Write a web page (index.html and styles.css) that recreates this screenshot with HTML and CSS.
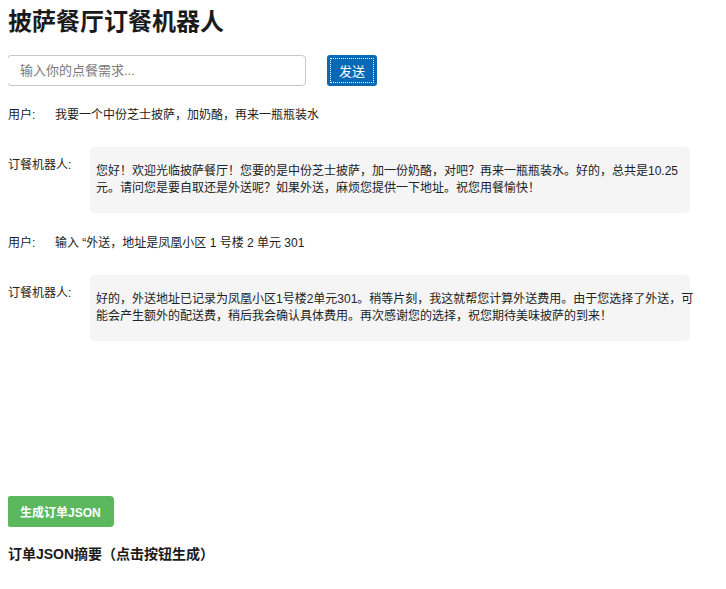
FILE: index.html
```html
<!DOCTYPE html>
<html lang="zh-CN">
<head>
<meta charset="utf-8">
<title>披萨餐厅订餐机器人</title>
<link rel="stylesheet" href="styles.css">
</head>
<body>
<h1 class="title">披萨餐厅订餐机器人</h1>
<div class="input-row">
  <input class="query" type="text" placeholder="输入你的点餐需求...">
  <button class="send">发送</button>
</div>
<div class="chat">
  <div class="msg user">
    <div class="who">用户:</div>
    <div class="text">我要一个中份芝士披萨，加奶酪，再来一瓶瓶装水</div>
  </div>
  <div class="msg bot">
    <div class="who">订餐机器人:</div>
    <div class="bubble"><p>您好！欢迎光临披萨餐厅！您要的是中份芝士披萨，加一份奶酪，对吧？再来一瓶瓶装水。好的，总共是10.25元。请问您是要自取还是外送呢？如果外送，麻烦您提供一下地址。祝您用餐愉快！</p></div>
  </div>
  <div class="msg user">
    <div class="who">用户:</div>
    <div class="text">输入 “外送，地址是凤凰小区 1 号楼 2 单元 301</div>
  </div>
  <div class="msg bot">
    <div class="who">订餐机器人:</div>
    <div class="bubble"><p>好的，外送地址已记录为凤凰小区1号楼2单元301。稍等片刻，我这就帮您计算外送费用。由于您选择了外送，可能会产生额外的配送费，稍后我会确认具体费用。再次感谢您的选择，祝您期待美味披萨的到来！</p></div>
  </div>
</div>
<button class="gen">生成订单JSON</button>
<h3 class="summary">订单JSON摘要（点击按钮生成）</h3>
</body>
</html>
```
FILE: styles.css
```css
body {
  margin: 8px;
  font-family: "Liberation Sans", "Noto Sans CJK SC", sans-serif;
  color: #222;
  background: #fff;
}
.title {
  font-size: 24px;
  font-weight: bold;
  line-height: 28px;
  margin: 0;
  color: #1a1a1a;
}
.input-row {
  display: flex;
  align-items: center;
  gap: 21px;
  margin-top: 19px;
  margin-left: -1px;
}
.query {
  width: 299px;
  height: 31px;
  box-sizing: border-box;
  border: 1px solid #c8c8c8;
  border-radius: 4px;
  padding: 0 12px;
  font-family: "Liberation Sans", "Noto Sans CJK SC", sans-serif;
  font-size: 13px;
  color: #333;
}
.query::placeholder {
  color: #7a7a7a;
}
.send {
  width: 50px;
  height: 31px;
  background: #0a69b4;
  border: none;
  border-radius: 3px;
  color: #fff;
  font-family: "Liberation Sans", "Noto Sans CJK SC", sans-serif;
  font-size: 13px;
  outline: 1px dotted #fff;
  outline-offset: -4px;
  padding: 0;
}
.chat {
  margin-top: 21px;
  height: 389px;
  font-size: 12px;
  line-height: 17px;
  color: #222;
}
.msg {
  display: flex;
}
.user .who {
  width: 47px;
  flex: none;
}
.bot {
  margin: 23px 0 22px;
}
.bot .who {
  width: 82px;
  flex: none;
  padding-top: 10px;
}
.bubble {
  width: 600px;
  box-sizing: border-box;
  background: #f5f5f5;
  border-radius: 5px;
  padding: 4px 0 4px 6px;
}
.bubble p {
  margin: 12px -5px 12px 0;
}
.gen {
  display: block;
  margin-left: -1px;
  height: 31px;
  padding: 0 13px;
  background: #5cb85c;
  border: none;
  border-radius: 4px;
  color: #fff;
  font-family: "Liberation Sans", "Noto Sans CJK SC", sans-serif;
  font-size: 12px;
  font-weight: bold;
}
.summary {
  margin: 18px 0 0;
  font-size: 14px;
  line-height: 18px;
  font-weight: bold;
  color: #1a1a1a;
}
```
